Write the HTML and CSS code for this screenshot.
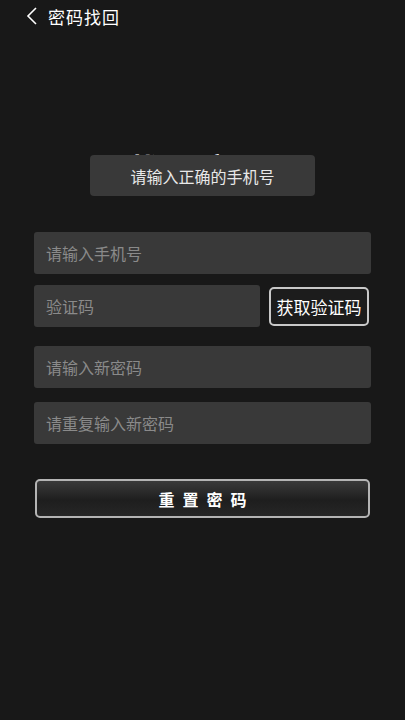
FILE: index.html
```html
<!DOCTYPE html>
<html lang="zh">
<head>
<meta charset="utf-8">
<link rel="stylesheet" href="styles.css">
</head>
<body>
<div class="page">
  <header class="topbar">
    <svg class="back" width="12" height="18" viewBox="0 0 12 18"><path d="M10 1 L2 9 L10 17" fill="none" stroke="#fff" stroke-width="1.6"/></svg>
    <span class="top-title">密码找回</span>
  </header>
  <div class="hero">
    <div class="big-title">找回密码</div>
    <div class="toast">请输入正确的手机号</div>
  </div>
  <form class="form">
    <div class="field">请输入手机号</div>
    <div class="code-row">
      <div class="field code">验证码</div>
      <button type="button" class="get-code">获取验证码</button>
    </div>
    <div class="field">请输入新密码</div>
    <div class="field">请重复输入新密码</div>
    <button type="button" class="reset">重置密码</button>
  </form>
</div>
</body>
</html>
```
FILE: styles.css
```css
* { box-sizing: border-box; }
html, body { margin: 0; padding: 0; }
body {
  background: #181818;
  font-family: "Noto Sans CJK SC", "Noto Sans", sans-serif;
  color: #fff;
  width: 405px;
  height: 720px;
}
.page { display: flex; flex-direction: column; }
.topbar {
  height: 32px;
  display: flex;
  align-items: center;
  padding-left: 26px;
  gap: 10px;
}
.back { display: block; margin-top: -1px; }
.top-title { font-size: 17px; letter-spacing: 1px; line-height: 1; }
.hero {
  position: relative;
  height: 200px;
  display: flex;
  justify-content: center;
}
.big-title {
  margin-top: 115px;
  font-size: 30px;
  font-weight: bold;
  letter-spacing: 6px;
  line-height: 40px;
  height: 40px;
}
.toast {
  position: absolute;
  left: 90px;
  top: 123px;
  width: 225px;
  height: 41px;
  background: #393939;
  border-radius: 4px;
  display: flex;
  align-items: center;
  justify-content: center;
  font-size: 16px;
  color: #e8e8e8;
}
.form {
  padding: 0 34px;
  display: flex;
  flex-direction: column;
}
.field {
  height: 42px;
  background: #393939;
  border-radius: 3px;
  display: flex;
  align-items: center;
  padding-left: 12px;
  font-size: 16px;
  color: #8a8a8a;
}
.code-row {
  display: flex;
  align-items: center;
  margin-top: 11px;
  margin-bottom: 19px;
  gap: 9px;
}
.field.code { width: 226px; }
.get-code {
  width: 100px;
  height: 39px;
  background: #1c1c1c;
  border: 2px solid #c8c8c8;
  border-radius: 5px;
  color: #fff;
  font-family: inherit;
  font-size: 17px;
  padding: 0;
  cursor: pointer;
}
.form > .field + .field { margin-top: 14px; }
.reset {
  margin-top: 35px;
  margin-left: 1px;
  width: 335px;
  height: 39px;
  border: 2px solid #b4b4b4;
  border-radius: 5px;
  background: linear-gradient(to bottom, #3a3a3a 0%, #1e1e1e 55%, #262626 100%);
  color: #fff;
  font-family: inherit;
  font-size: 16px;
  font-weight: bold;
  letter-spacing: 8px;
  padding: 0 0 0 8px;
  cursor: pointer;
}
```
